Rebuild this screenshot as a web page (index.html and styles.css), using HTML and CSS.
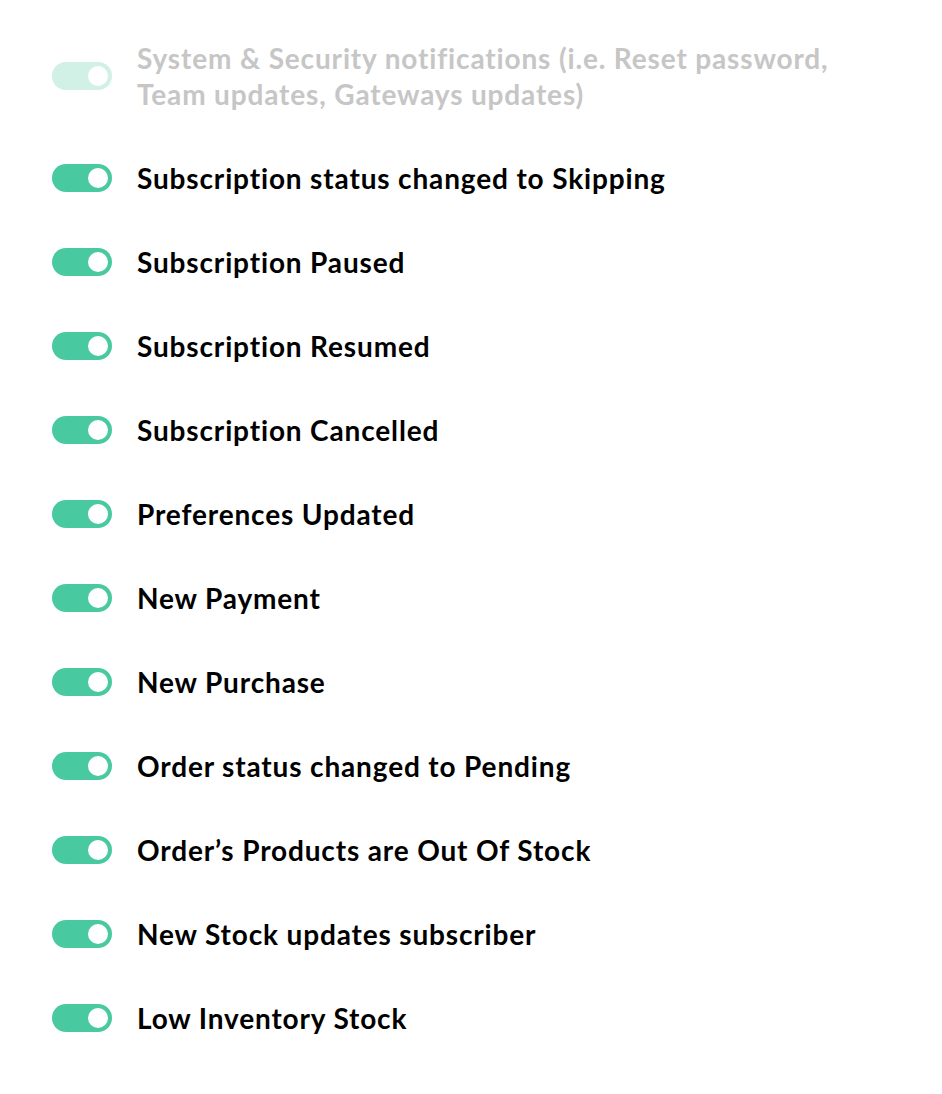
FILE: index.html
```html
<!DOCTYPE html>
<html>
<head>
<meta charset="utf-8">
<link rel="stylesheet" href="styles.css">
</head>
<body>
<ul class="list">
  <li class="row disabled"><span class="toggle on"><span class="knob"></span></span><span class="label">System &amp; Security notifications (i.e. Reset password, Team updates, Gateways updates)</span></li>
  <li class="row"><span class="toggle on"><span class="knob"></span></span><span class="label">Subscription status changed to Skipping</span></li>
  <li class="row"><span class="toggle on"><span class="knob"></span></span><span class="label">Subscription Paused</span></li>
  <li class="row"><span class="toggle on"><span class="knob"></span></span><span class="label">Subscription Resumed</span></li>
  <li class="row"><span class="toggle on"><span class="knob"></span></span><span class="label">Subscription Cancelled</span></li>
  <li class="row"><span class="toggle on"><span class="knob"></span></span><span class="label">Preferences Updated</span></li>
  <li class="row"><span class="toggle on"><span class="knob"></span></span><span class="label">New Payment</span></li>
  <li class="row"><span class="toggle on"><span class="knob"></span></span><span class="label">New Purchase</span></li>
  <li class="row"><span class="toggle on"><span class="knob"></span></span><span class="label">Order status changed to Pending</span></li>
  <li class="row"><span class="toggle on"><span class="knob"></span></span><span class="label">Order’s Products are Out Of Stock</span></li>
  <li class="row"><span class="toggle on"><span class="knob"></span></span><span class="label">New Stock updates subscriber</span></li>
  <li class="row"><span class="toggle on"><span class="knob"></span></span><span class="label">Low Inventory Stock</span></li>
</ul>
</body>
</html>
```
FILE: styles.css
```css
html, body {
  margin: 0;
  padding: 0;
  background: #ffffff;
}
body {
  font-family: "Lato", "Liberation Sans", sans-serif;
}
.list {
  list-style: none;
  margin: 0;
  padding: 40px 0 0 52px;
  display: flex;
  flex-direction: column;
  gap: 48px;
}
.row {
  display: flex;
  align-items: center;
  gap: 25px;
}
.toggle {
  flex: none;
  width: 60px;
  height: 28px;
  border-radius: 14px;
  background: #48c9a0;
  display: flex;
  align-items: center;
  justify-content: flex-end;
  padding: 0 4px;
  box-sizing: border-box;
}
.knob {
  width: 20px;
  height: 20px;
  border-radius: 50%;
  background: #ffffff;
}
.label {
  font-size: 28px;
  line-height: 36px;
  font-weight: 700;
  letter-spacing: 0.85px;
  font-variant-ligatures: none;
  color: #000000;
  max-width: 720px;
}
.disabled .toggle {
  background: #d1f0e6;
}
.disabled .label {
  color: #c6c6c6;
}
```
